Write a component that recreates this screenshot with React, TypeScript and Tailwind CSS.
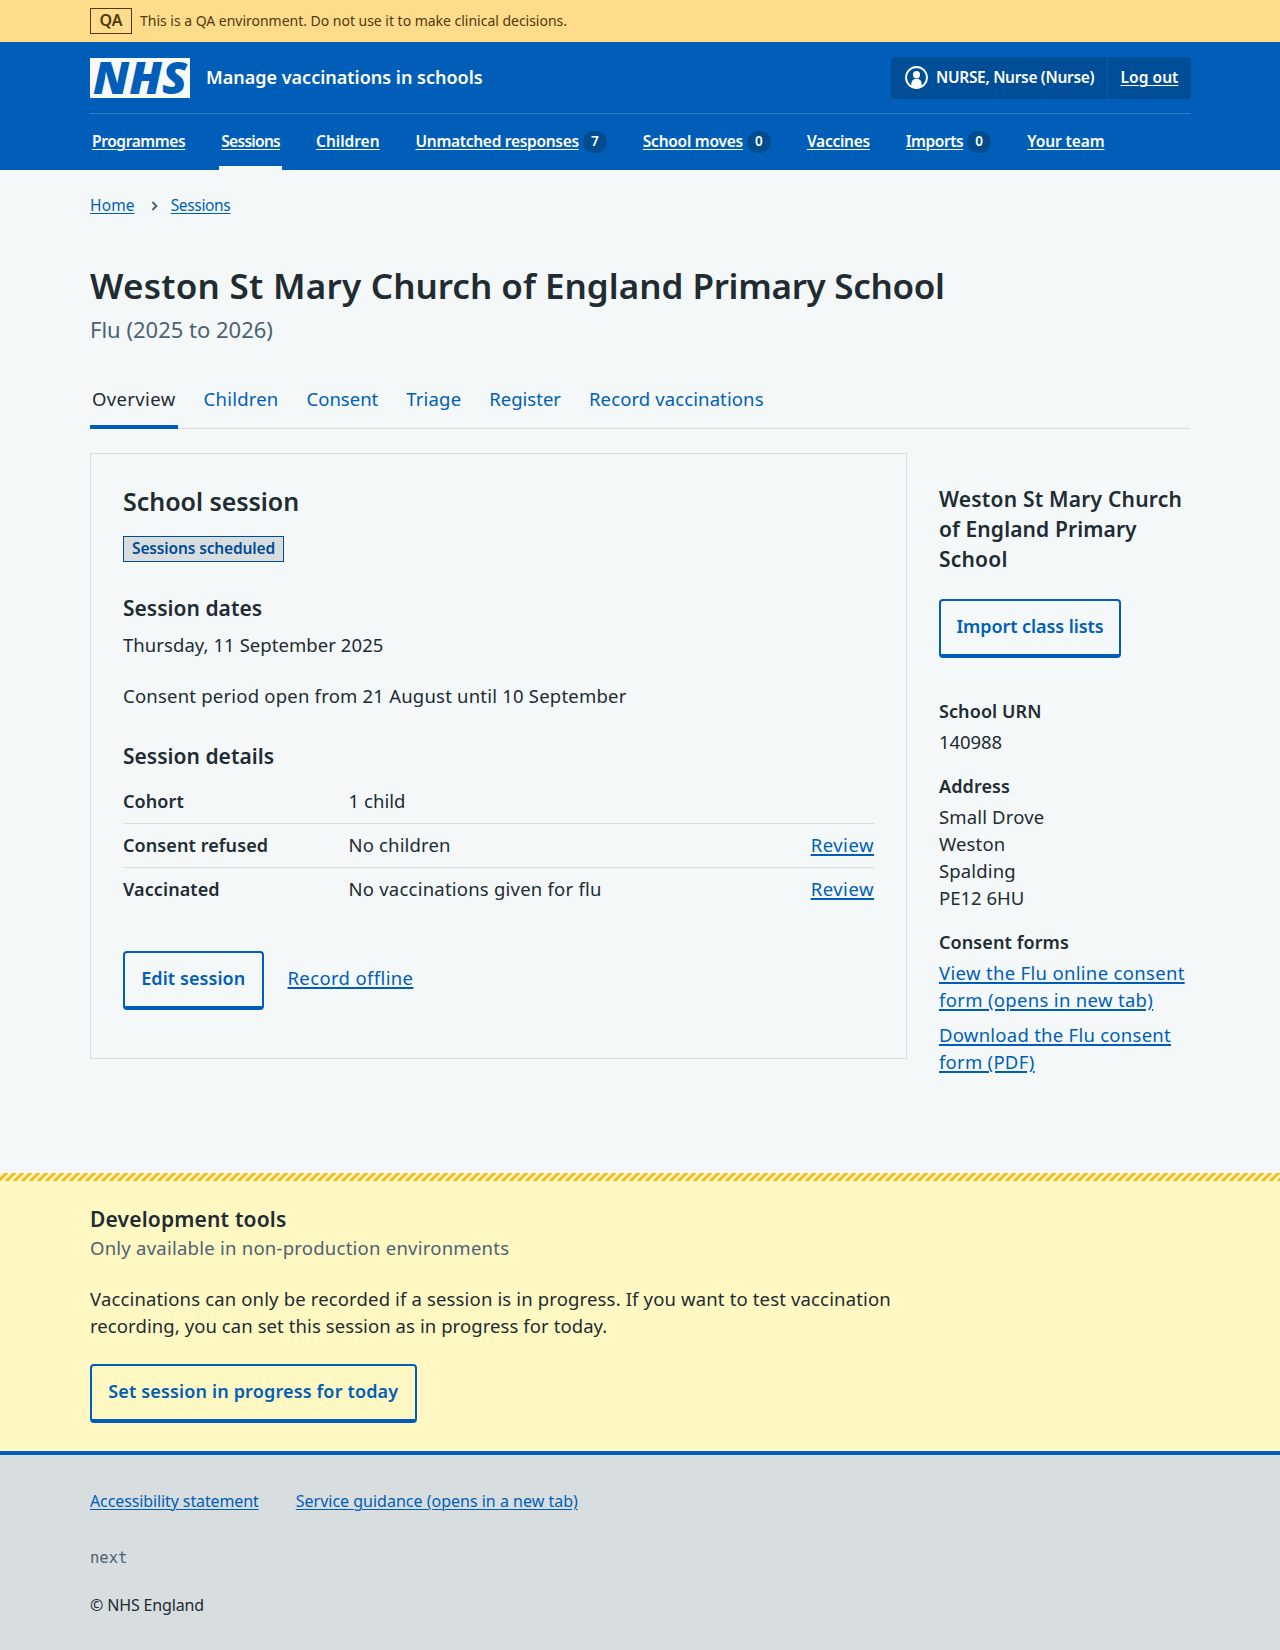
import type { ReactNode } from "react";

function Logo() {
  return (
    <svg viewBox="0 0 100 40" className="h-10 w-[100px] shrink-0 overflow-visible" role="img" aria-label="NHS">
      <rect width="100" height="40" className="fill-[#f7fafb]" />
      <text
        x="3"
        y="36"
        textLength="94"
        lengthAdjust="spacingAndGlyphs"
        className="fill-[#005eb8] font-['Noto_Sans'] text-[45px] leading-none font-black italic"
      >
        NHS
      </text>
    </svg>
  );
}

function UserIcon() {
  return (
    <svg viewBox="0 0 24 24" className="h-[23px] w-[23px]" fill="none">
      <circle cx="12" cy="12" r="10.9" stroke="white" strokeWidth="2" />
      <circle cx="12" cy="9" r="3.7" fill="white" />
      <path d="M6.6 21.4V18.5a5.4 5.4 0 0 1 10.8 0v2.9A11 11 0 0 1 6.6 21.4Z" fill="white" />
    </svg>
  );
}

function Button({ children, className }: { children: ReactNode; className: string }) {
  return (
    <button
      className={`h-[59px] shrink-0 rounded-[4px] border-2 border-b-4 border-[#005eb8] pb-[2px] text-center text-[18px] leading-[27px] font-semibold whitespace-nowrap text-[#005eb8] ${className}`}
    >
      {children}
    </button>
  );
}

const navItems = [
  { label: "Programmes", tracking: "tracking-[-0.39px]" },
  { label: "Sessions", tracking: "tracking-[-0.7px]", active: true },
  { label: "Children", tracking: "tracking-[-0.02px]" },
  { label: "Unmatched responses", tracking: "tracking-[-0.29px]", count: 7 },
  { label: "School moves", tracking: "tracking-[-0.25px]", count: 0 },
  { label: "Vaccines", tracking: "tracking-[-0.27px]" },
  { label: "Imports", tracking: "tracking-[-0.45px]", count: 0 },
  { label: "Your team", tracking: "tracking-[-0.1px]" },
];

const tabs = [
  { label: "Overview", tracking: "tracking-[0.36px]", active: true },
  { label: "Children", tracking: "tracking-[0.22px]" },
  { label: "Consent", tracking: "tracking-[0px]" },
  { label: "Triage", tracking: "tracking-[0.17px]" },
  { label: "Register", tracking: "tracking-[0px]" },
  { label: "Record vaccinations", tracking: "tracking-[0.11px]" },
];

const rows = [
  { key: "Cohort", value: "1 child", tracking: "tracking-[0.05px]", review: false },
  { key: "Consent refused", value: "No children", tracking: "tracking-[0.15px]", review: true },
  { key: "Vaccinated", value: "No vaccinations given for flu", tracking: "tracking-[0.22px]", review: true },
];

const smallLink = "underline decoration-1 underline-offset-2";
const link = "text-[#005eb8] underline decoration-[1.5px] underline-offset-2";
const term = "-mb-px pt-px text-[18px] font-semibold tracking-[0.09px]";

export default function App() {
  return (
    <div className="min-h-[1650px] bg-[#f4f8f9] font-['Noto_Sans',sans-serif] text-[18.5px] leading-[27px] text-[#212b32]">
      <div className="flex h-[42px] items-center gap-2 bg-[#ffdb8c] px-[90px] text-[#4d3a0e]">
        <strong className="flex h-[26px] w-[42px] items-center justify-center border border-[#4d3a0e] pb-px text-[16px] font-semibold">
          QA
        </strong>
        <span className="pb-px text-[14px] tracking-[-0.02px]">
          This is a QA environment. Do not use it to make clinical decisions.
        </span>
      </div>

      <header className="h-32 bg-[#005eb8] px-[90px] text-white">
        <div className="flex h-[72px] items-center border-b border-white/20">
          <Logo />
          <span className="ml-4 text-[18px] font-semibold">Manage vaccinations in schools</span>
          <div className="-mr-px ml-auto flex h-[42px] w-[300px] overflow-hidden rounded-[4px] bg-[#004e98] text-[15.5px] font-semibold">
            <div className="flex w-[217px] items-center border-r border-[#005eb8] pl-[14px]">
              <UserIcon />
              <span className="ml-2 tracking-[-0.32px]">NURSE, Nurse (Nurse)</span>
            </div>
            <a className={`flex flex-1 items-center justify-center tracking-[0.05px] ${smallLink}`}>Log out</a>
          </div>
        </div>
        <nav className="flex h-14 gap-8 text-[15.5px] font-semibold">
          {navItems.map((item) => (
            <div
              key={item.label}
              className={`flex items-center border-b-4 px-[2px] pt-[3px] ${item.active ? "border-[#f4f8f9]" : "border-transparent"}`}
            >
              <a className={`${smallLink} ${item.tracking}`}>{item.label}</a>
              {item.count !== undefined && (
                <span className="ml-1 flex h-[22px] w-6 items-center justify-center rounded-full bg-[#004c8f] text-[13.5px] font-semibold">
                  {item.count}
                </span>
              )}
            </div>
          ))}
        </nav>
      </header>

      <main className="h-[1003px] px-[90px] pt-[23px]">
        <div className="flex h-6 items-center text-[15.5px] leading-6 text-[#005eb8]">
          <a className={`tracking-[0.15px] ${smallLink}`}>Home</a>
          <svg viewBox="0 0 8 12" className="mt-px mr-[13px] ml-[16px] h-[10px] w-[7px]" fill="none">
            <path d="M1.5 1.2 6.3 6l-4.8 4.8" stroke="#4c6272" strokeWidth="2.4" />
          </svg>
          <a className={`tracking-[-0.35px] ${smallLink}`}>Sessions</a>
        </div>

        <h1 className="mt-[47px] text-[35px] leading-[44px] font-semibold whitespace-nowrap">
          <span className="tracking-[0.28px]">Weston St Mary </span>
          Church of England <span className="tracking-[-0.3px]">Primary School</span>
        </h1>
        <p className="mt-[5px] text-[22px] leading-8 text-[#4c6272]">Flu (2025 to 2026)</p>

        <nav className="mt-10 flex h-11 gap-6 shadow-[inset_0_-1px_0_#d8dde0]">
          {tabs.map((tab) => (
            <a
              key={tab.label}
              className={`border-b-4 px-[2px] ${tab.tracking} ${tab.active ? "border-[#005eb8]" : "border-transparent text-[#005eb8]"}`}
            >
              {tab.label}
            </a>
          ))}
        </nav>

        <div className="mt-6 flex items-start gap-8">
          <section className="h-[606px] w-[817px] shrink-0 border border-[#d8dde0] p-8">
            <h2 className="text-[25px] leading-[30px] font-semibold tracking-[-0.04px]">School session</h2>
            <strong className="mt-5 flex h-[26px] w-[161px] items-center justify-center border border-[#004c93] bg-[#d8dde0] pb-px text-[15.5px] font-semibold tracking-[-0.14px] text-[#004c93]">
              Sessions scheduled
            </strong>
            <h3 className="mt-[31px] text-[21px] leading-[30px] font-semibold tracking-[0.02px]">Session dates</h3>
            <p className="mt-2 tracking-[0.06px]">Thursday, 11 September 2025</p>
            <p className="mt-6 tracking-[0.21px]">Consent period open from 21 August until 10 September</p>
            <h3 className="mt-8 text-[21px] leading-[30px] font-semibold tracking-[0.02px]">Session details</h3>
            <dl className="mt-[9px]">
              {rows.map((row) => (
                <div
                  key={row.key}
                  className="grid h-11 grid-cols-[225.5px_1fr_auto] border-b border-[#d8dde0] pt-[7px] last:border-transparent"
                >
                  <dt className={term}>{row.key}</dt>
                  <dd className={row.tracking}>{row.value}</dd>
                  {row.review && <a className={`tracking-[0.5px] ${link}`}>Review</a>}
                </div>
              ))}
            </dl>
            <div className="mt-[39px] flex items-center gap-6">
              <Button className="w-[140.5px] tracking-[0.07px]">Edit session</Button>
              <a className={`pb-[6px] tracking-[0.36px] ${link}`}>Record offline</a>
            </div>
          </section>

          <aside className="w-[252px] pt-[31px]">
            <h3 className="text-[21px] leading-[30px] font-semibold tracking-[0.2px]">
              Weston St Mary Church
              <br />
              <span className="tracking-[0.11px]">of England Primary</span>
              <br />
              School
            </h3>
            <Button className="mt-[25px] w-[182px] tracking-[-0.08px]">Import class lists</Button>
            <dl className="mt-[39px]">
              <dt className={term}>School URN</dt>
              <dd className="mt-1 tracking-[-0.08px]">140988</dd>
              <dt className={`${term} mt-[17px]`}>Address</dt>
              <dd className="mt-1 tracking-[0.15px]">
                Small Drove
                <br />
                Weston
                <br />
                Spalding
                <br />
                <span className="tracking-[0px]">PE12 6HU</span>
              </dd>
              <dt className={`${term} mt-[17px]`}>Consent forms</dt>
              <dd className="mt-1 tracking-[0.32px]">
                <a className={link}>
                  View the Flu online consent
                  <br />
                  form (opens in new tab)
                </a>
              </dd>
              <dd className="mt-2 tracking-[0.26px]">
                <a className={link}>
                  Download the Flu consent
                  <br />
                  form (PDF)
                </a>
              </dd>
            </dl>
          </aside>
        </div>
      </main>

      <section className="h-[278px] bg-[#fff8c2]">
        <div className="h-2 bg-[linear-gradient(-45deg,#ffb81c_25%,transparent_25%,transparent_50%,#ffb81c_50%,#ffb81c_75%,transparent_75%)] bg-[length:8px_8px]" />
        <div className="px-[90px] pt-[23px]">
          <h3 className="text-[21px] leading-[30px] font-semibold tracking-[0.17px]">Development tools</h3>
          <p className="tracking-[0.24px] text-[#4c6272]">Only available in non-production environments</p>
          <p className="mt-6 w-[817px] tracking-[0.15px]">
            Vaccinations can only be recorded if a session is in progress. If you want to test vaccination{" "}
            <span className="tracking-[0.08px]">
              recording, you can set this session as in progress for today.
            </span>
          </p>
          <Button className="mt-[25px] w-[326.5px] tracking-[0.15px]">Set session in progress for today</Button>
        </div>
      </section>

      <footer className="h-[199px] border-t-4 border-[#005eb8] bg-[#d8dde0] px-[90px] pt-[34px] text-[16px] leading-6">
        <div className="flex gap-[37px] text-[#005eb8]">
          <a className={`tracking-[-0.11px] ${smallLink}`}>Accessibility statement</a>
          <a className={smallLink}>Service guidance (opens in a new tab)</a>
        </div>
        <p className="mt-[33px] font-['DejaVu_Sans_Mono',monospace] text-[15.5px] text-[#4c6272]">next</p>
        <p className="mt-[23px] tracking-[-0.14px]">© NHS England</p>
      </footer>
    </div>
  );
}
